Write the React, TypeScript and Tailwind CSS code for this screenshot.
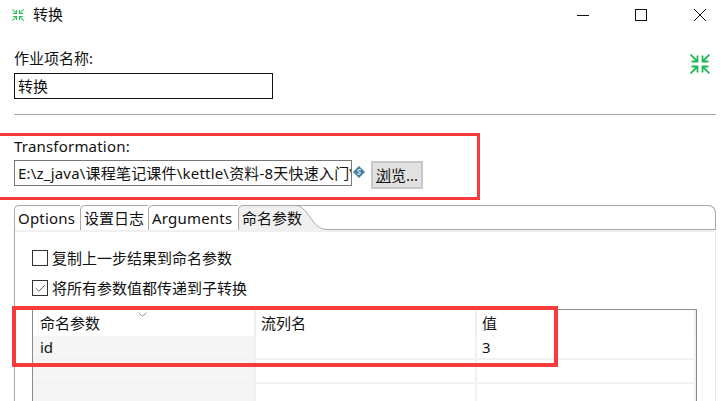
import { Check } from "lucide-react";

const font = "font-['Noto_Sans','Noto_Sans_CJK_SC',sans-serif]";

function ShrinkIcon({ className }: { className: string }) {
  return (
    <svg viewBox="0 0 20 20" fill="none" stroke="currentColor" strokeWidth="1.8" className={className}>
      <path d="M0.6 0.6 L7 7 M7.5 1.5 V7.5 H1.5" />
      <path d="M19.4 0.6 L13 7 M12.5 1.5 V7.5 H18.5" />
      <path d="M0.6 19.4 L7 13 M7.5 18.5 V12.5 H1.5" />
      <path d="M19.4 19.4 L13 13 M12.5 18.5 V12.5 H18.5" />
    </svg>
  );
}

function WindowButtons() {
  return (
    <div className="ml-auto flex items-center">
      <svg width="12" height="12" viewBox="0 0 12 12" stroke="#111" className="mr-[46px]">
        <path d="M0 6.5 H12" />
      </svg>
      <svg width="12" height="12" viewBox="0 0 12 12" fill="none" stroke="#111" className="mr-[47px]">
        <rect x="0.5" y="0.5" width="11" height="11" />
      </svg>
      <svg width="12" height="12" viewBox="0 0 12 12" stroke="#111" className="mr-[17px]">
        <path d="M0 0 L12 12 M12 0 L0 12" />
      </svg>
    </div>
  );
}

function Tab({ label, className }: { label: string; className: string }) {
  return (
    <div className={`relative z-10 h-[25px] flex items-center shrink-0 border-t border-l border-[#a8a8a8] pl-[3px] rounded-tl-[5px] whitespace-nowrap ${className}`}>
      {label}
    </div>
  );
}

function CheckRow({ label, checked }: { label: string; checked?: boolean }) {
  return (
    <div className="flex items-center gap-[4px] h-[16px]">
      <div className="w-[16px] h-[16px] border border-[#333] flex items-center justify-center">
        {checked && <Check size={13} strokeWidth={1.6} className="text-[#444]" />}
      </div>
      <span>{label}</span>
    </div>
  );
}

function Row({ name, value }: { name?: string; value?: string }) {
  return (
    <div className="flex h-[24px] border-b-2 border-[#f2f2f2]">
      <div className="w-[221px] bg-[#f5f5f5] pl-[7px] leading-[22px] shrink-0">{name}</div>
      <div className="w-[2px] bg-[#eef0f6] shrink-0" />
      <div className="w-[219px] shrink-0" />
      <div className="w-[2px] bg-[#eef0f6] shrink-0" />
      <div className="w-[217px] pl-[5px] leading-[22px] shrink-0">{value}</div>
      <div className="w-[2px] bg-[#eef0f6] shrink-0" />
    </div>
  );
}

export default function App() {
  return (
    <div className={`relative w-[723px] h-[401px] overflow-hidden bg-white text-[15px] text-[#111] ${font}`}>
      {/* Title bar */}
      <div className="flex items-center h-[29px] pl-[12px]">
        <ShrinkIcon className="w-[12px] h-[12px] text-[#2fc060]" />
        <span className="ml-[9px]">转换</span>
        <WindowButtons />
      </div>

      {/* Job entry name */}
      <div className="px-[14px] pt-[19px]">
        <div className="flex justify-between">
          <div>
            <div className="leading-[20px]">作业项名称:</div>
            <div className="mt-[5px] w-[259px] h-[26px] border border-[#111] pl-[3px] leading-[24px]">转换</div>
          </div>
          <ShrinkIcon className="w-[20px] h-[20px] mt-[6px] mr-[-1px] text-[#1fb856]" />
        </div>
        <div className="mt-[15px] h-[1px] w-[702px] bg-[#a8a8a8]" />

        {/* Transformation */}
        <div className="mt-[21px] leading-[20px] tracking-[0.2px]">Transformation:</div>
        <div className="mt-[4px] flex items-start">
          <div className="w-[338px] h-[26px] border border-[#777] pl-[3px] leading-[24px] overflow-hidden whitespace-nowrap tracking-[0.2px]">
            E:\z_java\课程笔记课件\kettle\资料-8天快速入门\
          </div>
          <svg viewBox="0 0 12 12" className="w-[12px] h-[12px] mt-[6px] ml-[1px]">
            <path d="M6 0 L12 6 L6 12 L0 6 Z" fill="#3f7f9f" />
            <path d="M8 4.2 C7 3 4.5 3.4 4.8 5 C5 6.4 7.6 5.6 7.4 7 C7.2 8.6 5 8.6 4 7.6" fill="none" stroke="#fff" />
          </svg>
          <div className="ml-[6px] mt-[1px] w-[52px] h-[28px] bg-[#e1e1e1] border-2 border-[#c8c8c8] text-center leading-[24px]">
            <span className="underline">浏</span>览...
          </div>
        </div>

        {/* Tab folder */}
        <div className="mt-[16px] w-[702px]">
          <div className="flex h-[25px] items-end">
            <Tab label="Options" className="w-[66px] bg-white tracking-[0.2px]" />
            <Tab label="设置日志" className="w-[68px] bg-white" />
            <Tab label="Arguments" className="w-[90px] bg-white tracking-[0.2px]" />
            <Tab label="命名参数" className="w-[57px] bg-[#f0f0f0]" />
            <svg viewBox="0 0 32 25" className="w-[32px] h-[25px] shrink-0">
              <path d="M0 0.5 C14 0.5 16 24.5 32 24.5 V25 H0 Z" fill="#f0f0f0" />
              <path d="M0 0.5 H32" fill="none" stroke="#a8a8a8" />
              <path d="M0 0.5 C14 0.5 16 24.5 32 24.5" fill="none" stroke="#a8a8a8" />
            </svg>
            <div className="flex-1 h-[25px] border-t border-b border-r border-[#a8a8a8] rounded-tr-[8px]" />
          </div>
          <div className="h-[2px] bg-[#f0f0f0] border-l border-[#a8a8a8]" />
          <div className="h-[200px] border-l border-r border-l-[#a8a8a8] border-r-[#e8e8e8] pl-[17px] pr-[18px] pt-[18px]">
            <div className="flex flex-col gap-[14px]">
              <CheckRow label="复制上一步结果到命名参数" />
              <CheckRow label="将所有参数值都传递到子转换" checked />
            </div>

            {/* Named parameters table */}
            <div className="mt-[13px] w-[665px] h-[120px] border border-[#8c8c8c] border-b-0 relative">
              <div className="flex h-[26px] items-center">
                <div className="w-[221px] pl-[7px] shrink-0">命名参数</div>
                <div className="w-[2px] h-full bg-[#eeeeee] shrink-0" />
                <div className="w-[219px] pl-[5px] shrink-0">流列名</div>
                <div className="w-[2px] h-full bg-[#eeeeee] shrink-0" />
                <div className="w-[217px] pl-[5px] shrink-0">值</div>
                <div className="w-[2px] h-full bg-[#eeeeee] shrink-0" />
              </div>
              <Row name="id" value="3" />
              <Row />
              <Row />
              <svg viewBox="0 0 10 5" fill="none" stroke="#888" className="absolute left-[105px] top-[2px] w-[9px] h-[5px]">
                <path d="M0.5 0.5 L5 4.5 L9.5 0.5" />
              </svg>
            </div>
          </div>
        </div>
      </div>

      {/* Red annotations */}
      <div className="absolute left-[-4px] top-[133px] w-[484px] h-[67px] border-[3px] border-[#f73b3b]" />
      <div className="absolute left-[12px] top-[306px] w-[546px] h-[61px] border-4 border-[#f73b3b]" />
    </div>
  );
}
